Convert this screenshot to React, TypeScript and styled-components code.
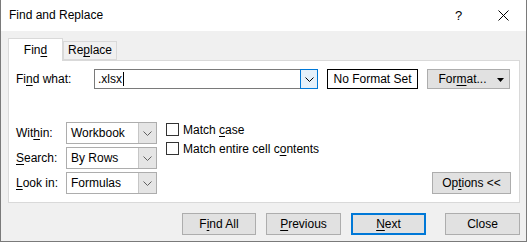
import React from 'react'
import styled, { createGlobalStyle } from 'styled-components'

const GlobalStyle = createGlobalStyle`
  html, body {
    margin: 0;
    padding: 0;
    background: #ffffff;
  }
  body {
    font-family: 'Segoe UI', 'Liberation Sans', Arial, sans-serif;
    font-size: 12px;
    color: #000;
  }
  u {
    text-decoration-thickness: 1px;
    text-underline-offset: 2px;
  }
`

const Window = styled.div`
  box-sizing: border-box;
  width: 527px;
  height: 242px;
  border: 1px solid #7a7a7a;
  border-top: none;
  display: flex;
  flex-direction: column;
  background: #f0f0f0;
`

const TitleBar = styled.div`
  height: 31px;
  flex: none;
  background: #ffffff;
  display: flex;
  align-items: center;
  padding: 0 0 0 8px;
  font-size: 12px;
`

const TitleText = styled.div`
  flex: 1;
  padding-bottom: 1px;
`

const TitleButton = styled.div`
  width: 45px;
  height: 31px;
  display: flex;
  align-items: center;
  justify-content: center;
  font-size: 13px;
`

const Body = styled.div`
  flex: 1;
  display: flex;
  flex-direction: column;
  padding: 7px 7px 0 7px;
`

const TabRow = styled.div`
  display: flex;
  align-items: flex-end;
  height: 22px;
  position: relative;
  z-index: 1;
`

const Tab = styled.div<{ active?: boolean }>`
  box-sizing: border-box;
  width: ${({ active }) => (active ? 55 : 54)}px;
  height: ${({ active }) => (active ? 23 : 19)}px;
  margin-bottom: ${({ active }) => (active ? -1 : 0)}px;
  margin-left: ${({ active }) => (active ? 0 : 0)}px;
  background: ${({ active }) => (active ? '#ffffff' : '#f0f0f0')};
  border: 1px solid #d9d9d9;
  border-bottom: ${({ active }) => (active ? 'none' : '1px solid #d9d9d9')};
  display: flex;
  justify-content: center;
  padding-top: ${({ active }) => (active ? 4 : 1)}px;
`

const Panel = styled.div`
  box-sizing: border-box;
  width: 512px;
  height: 143px;
  background: #ffffff;
  border: 1px solid #d9d9d9;
  padding: 8px 8px 7px 7px;
  display: flex;
  flex-direction: column;
`

const FindRow = styled.div`
  display: flex;
  align-items: center;
  height: 20px;
`

const Label = styled.div<{ width: number }>`
  width: ${({ width }) => width}px;
  flex: none;
`

const TextCombo = styled.div`
  box-sizing: border-box;
  width: 224px;
  height: 20px;
  border: 1px solid #7a7a7a;
  display: flex;
  align-items: center;
`

const ComboText = styled.div`
  flex: 1;
  padding-left: 3px;
  display: flex;
  align-items: center;
`

const Caret = styled.span`
  display: inline-block;
  width: 1px;
  height: 14px;
  background: #000;
  margin-left: 1px;
`

const ComboButton = styled.div`
  box-sizing: border-box;
  width: 18px;
  height: 20px;
  margin: -1px -1px -1px 0;
  border: 1px solid #0078d7;
  background: #e5f1fb;
  display: flex;
  align-items: center;
  justify-content: center;
`

const FormatPreview = styled.div`
  box-sizing: border-box;
  width: 91px;
  height: 20px;
  margin-left: 9px;
  border: 1px solid #000;
  border-width: 1.5px;
  display: flex;
  align-items: center;
  justify-content: center;
`

const Button = styled.div<{ width: number; primary?: boolean }>`
  box-sizing: border-box;
  width: ${({ width }) => width}px;
  height: 22px;
  flex: none;
  background: #e1e1e1;
  border: ${({ primary }) => (primary ? '2px solid #0078d7' : '1px solid #adadad')};
  display: flex;
  align-items: center;
  justify-content: center;
  position: relative;
`

const FormatButton = styled(Button)`
  height: 20px;
  margin-left: 9px;
  padding-right: 12px;
`

const SplitArrow = styled.svg`
  position: absolute;
  right: 5px;
  top: 8px;
`

const OptionsArea = styled.div`
  display: flex;
  margin-top: 33px;
  flex: 1;
`

const SelectGrid = styled.div`
  display: grid;
  grid-template-columns: 50px 91px;
  grid-auto-rows: 22px;
  row-gap: 3px;
  align-items: center;
`

const Select = styled.div`
  box-sizing: border-box;
  height: 22px;
  border: 1px solid #adadad;
  display: flex;
  align-items: center;
`

const SelectValue = styled.div`
  flex: 1;
  padding-left: 4px;
`

const SelectArrow = styled.div`
  width: 17px;
  height: 20px;
  background: #e5e5e5;
  border-left: 1px solid #c6c6c6;
  display: flex;
  align-items: center;
  justify-content: center;
`

const CheckColumn = styled.div`
  display: flex;
  flex-direction: column;
  gap: 6px;
  margin-left: 9px;
  padding-top: 1px;
`

const CheckRow = styled.div`
  display: flex;
  align-items: center;
  gap: 4px;
  height: 13px;
`

const CheckBox = styled.div`
  box-sizing: border-box;
  width: 13px;
  height: 13px;
  border: 1px solid #333333;
  background: #ffffff;
`

const OptionsSlot = styled.div`
  flex: 1;
  display: flex;
  justify-content: flex-end;
  align-items: flex-end;
  padding-bottom: 1px;
`

const Footer = styled.div`
  display: flex;
  justify-content: flex-end;
  width: 512px;
  padding-top: 10px;
  gap: 10px;
`

const CloseSlot = styled.div`
  margin-left: 9px;
`

const Chevron = ({ color = '#606060' }: { color?: string }) => (
  <svg width="9" height="5" viewBox="0 0 9 5">
    <polyline points="0.5,0.5 4.5,4.5 8.5,0.5" fill="none" stroke={color} strokeWidth="1" />
  </svg>
)

const selects = [
  { label: <>Wit<u>h</u>in:</>, value: 'Workbook' },
  { label: <><u>S</u>earch:</>, value: 'By Rows' },
  { label: <><u>L</u>ook in:</>, value: 'Formulas' }
]

export default function App() {
  return (
    <>
      <GlobalStyle />
      <Window>
        <TitleBar>
          <TitleText>Find and Replace</TitleText>
          <TitleButton>?</TitleButton>
          <TitleButton>
            <svg width="11" height="11" viewBox="0 0 11 11">
              <path d="M0.5 0.5 L10.5 10.5 M10.5 0.5 L0.5 10.5" stroke="#000" strokeWidth="1" />
            </svg>
          </TitleButton>
        </TitleBar>
        <Body>
          <TabRow>
            <Tab active>
              Fin<u>d</u>
            </Tab>
            <Tab>
              Re<u>p</u>lace
            </Tab>
          </TabRow>
          <Panel>
            <FindRow>
              <Label width={78}>
                Fi<u>n</u>d what:
              </Label>
              <TextCombo>
                <ComboText>
                  .xlsx
                  <Caret />
                </ComboText>
                <ComboButton>
                  <Chevron color="#000" />
                </ComboButton>
              </TextCombo>
              <FormatPreview>No Format Set</FormatPreview>
              <FormatButton width={83}>
                For<u>m</u>at...
                <SplitArrow width="7" height="4" viewBox="0 0 7 4">
                  <polygon points="0,0 7,0 3.5,4" fill="#000" />
                </SplitArrow>
              </FormatButton>
            </FindRow>
            <OptionsArea>
              <SelectGrid>
                {selects.map((s, i) => (
                  <React.Fragment key={i}>
                    <Label width={50}>{s.label}</Label>
                    <Select>
                      <SelectValue>{s.value}</SelectValue>
                      <SelectArrow>
                        <Chevron />
                      </SelectArrow>
                    </Select>
                  </React.Fragment>
                ))}
              </SelectGrid>
              <CheckColumn>
                <CheckRow>
                  <CheckBox />
                  <span>
                    Match <u>c</u>ase
                  </span>
                </CheckRow>
                <CheckRow>
                  <CheckBox />
                  <span>
                    Match entire cell c<u>o</u>ntents
                  </span>
                </CheckRow>
              </CheckColumn>
              <OptionsSlot>
                <Button width={79}>
                  Op<u>t</u>ions &lt;&lt;
                </Button>
              </OptionsSlot>
            </OptionsArea>
          </Panel>
          <Footer>
            <Button width={74}>
              F<u>i</u>nd All
            </Button>
            <Button width={75}>
              <u>P</u>revious
            </Button>
            <Button width={75} primary>
              <u>N</u>ext
            </Button>
            <CloseSlot>
              <Button width={75}>Close</Button>
            </CloseSlot>
          </Footer>
        </Body>
      </Window>
    </>
  )
}
